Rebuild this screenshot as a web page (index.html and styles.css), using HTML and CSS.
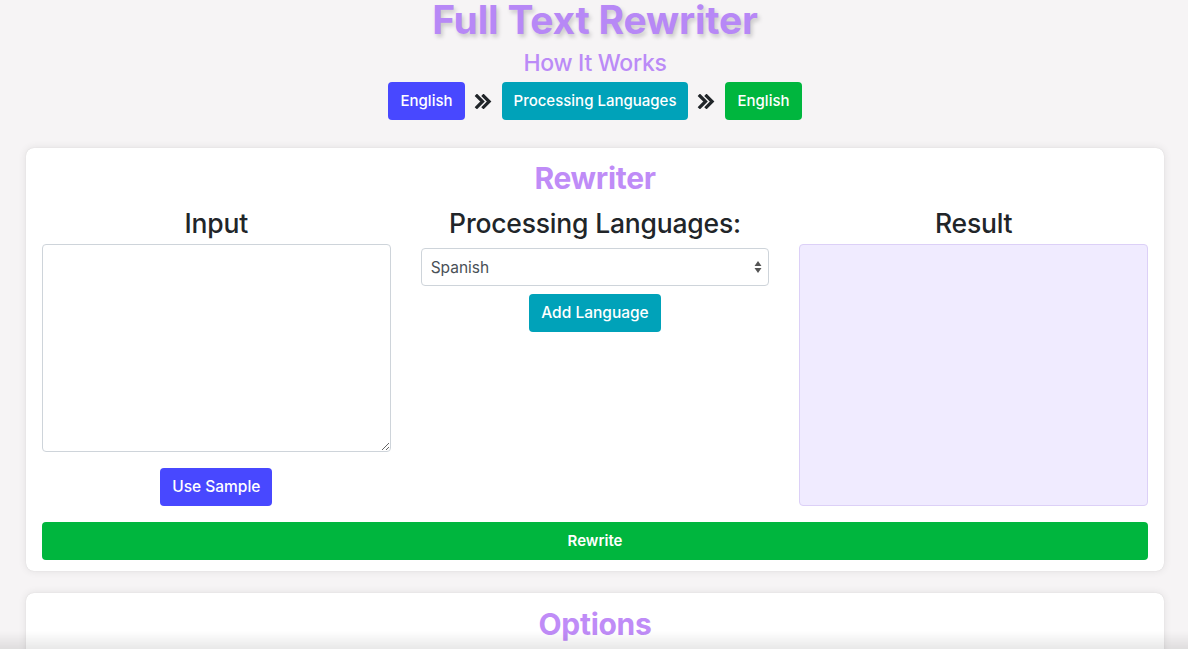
FILE: index.html
```html
<!DOCTYPE html>
<html>
<head>
<meta charset="utf-8">
<link rel="stylesheet" href="styles.css">
</head>
<body>
<header class="top">
  <h1 class="title">Full Text Rewriter</h1>
  <h2 class="subtitle">How It Works</h2>
  <div class="flow">
    <span class="btn btn-blue">English</span>
    <svg class="chev" viewBox="0 0 20 16" width="19" height="15"><path d="M3 2l6 6-6 6M10 2l6 6-6 6" fill="none" stroke="#212529" stroke-width="3.4" stroke-linecap="square" stroke-linejoin="miter"/></svg>
    <span class="btn btn-teal">Processing Languages</span>
    <svg class="chev" viewBox="0 0 20 16" width="19" height="15"><path d="M3 2l6 6-6 6M10 2l6 6-6 6" fill="none" stroke="#212529" stroke-width="3.4" stroke-linecap="square" stroke-linejoin="miter"/></svg>
    <span class="btn btn-green">English</span>
  </div>
</header>

<section class="card">
  <h2 class="card-title">Rewriter</h2>
  <div class="cols">
    <div class="col">
      <h3 class="col-title">Input</h3>
      <textarea class="input-box"></textarea>
      <button class="btn btn-blue btn-mid">Use Sample</button>
    </div>
    <div class="col">
      <h3 class="col-title">Processing Languages:</h3>
      <div class="select">
        <span>Spanish</span>
        <svg width="8" height="14" viewBox="0 0 8 14"><path d="M4 1L7.5 6H0.5Z M4 13L7.5 8H0.5Z" fill="#555"/></svg>
      </div>
      <button class="btn btn-teal btn-mid">Add Language</button>
    </div>
    <div class="col">
      <h3 class="col-title">Result</h3>
      <div class="result"></div>
    </div>
  </div>
  <button class="btn btn-green btn-full">Rewrite</button>
</section>

<section class="card card-options">
  <h2 class="card-title">Options</h2>
</section>

<div class="fade"></div>
</body>
</html>
```

FILE: styles.css
```css
* { box-sizing: border-box; }
html, body { margin: 0; padding: 0; }
body {
  background: #f6f4f5;
  font-family: Inter, "Noto Sans", sans-serif;
  color: #212529;
  padding: 0 24px 0 26px;
  overflow: hidden;
  height: 649px;
}
.top {
  display: flex;
  flex-direction: column;
  align-items: center;
}
.title {
  margin: 0;
  font-size: 39px;
  font-weight: 700;
  line-height: 40px;
  color: #b788f6;
  letter-spacing: -0.2px;
  text-shadow: 2px 3px 4px rgba(0,0,0,0.18);
}
.subtitle {
  margin: 10px 0 0;
  font-size: 23px;
  line-height: 26px;
  font-weight: 500;
  color: #bb8bf7;
  letter-spacing: -0.3px;
}
.flow {
  margin-top: 6px;
  display: flex;
  align-items: center;
  gap: 8px;
}
.flow .btn { font-size: 15px; }
.chev { display: block; margin: 0 1px; }
.btn {
  display: inline-block;
  border: none;
  border-radius: 4px;
  color: #fff;
  font-family: Inter, "Noto Sans", sans-serif;
  font-size: 15.5px;
  font-weight: 500;
  line-height: 38px;
  height: 38px;
  padding: 0 12px;
  white-space: nowrap;
}
.btn-blue { background: #4848ff; }
.btn-teal { background: #00a2b9; }
.btn-green { background: #00b63e; }

.card {
  background: #fff;
  border-radius: 8px;
  box-shadow: 0 0 8px rgba(0,0,0,0.09), 0 0 1px rgba(0,0,0,0.15);
  margin: 28px 0 0;
  padding: 10px 16px 11px;
  width: 1138px;
}
.card-title {
  margin: 0;
  text-align: center;
  font-size: 30px;
  line-height: 40px;
  font-weight: 700;
  color: #bf8cf7;
  letter-spacing: -0.3px;
}
.cols {
  display: grid;
  grid-template-columns: repeat(3, 1fr);
  column-gap: 30px;
  margin-top: 8px;
}
.col {
  display: flex;
  flex-direction: column;
  align-items: center;
}
.col-title {
  margin: 0;
  font-size: 26.5px;
  line-height: 34px;
  font-weight: 500;
  color: #212529;
  letter-spacing: -0.2px;
  height: 34px;
}
.input-box {
  display: block;
  width: 100%;
  height: 208px;
  border: 1px solid #ced4da;
  border-radius: 4px;
  margin: 4px 0 0;
  resize: vertical;
  background: #fff;
}
.btn-mid { margin-top: 16px; }
.select {
  margin-top: 8px;
  width: 100%;
  height: 38px;
  border: 1px solid #ced4da;
  border-radius: 4px;
  display: flex;
  align-items: center;
  justify-content: space-between;
  padding: 0 6px 0 9px;
  font-size: 15.5px;
  color: #495057;
}
.col .select + .btn-mid { margin-top: 8px; }
.result {
  margin-top: 4px;
  width: 100%;
  height: 262px;
  background: #f0ebff;
  border: 1px solid #dcd0f7;
  border-radius: 4px;
}
.btn-full {
  display: block;
  width: 100%;
  margin-top: 16px;
  font-size: 15px;
  font-weight: 600;
}
.card-options {
  margin-top: 22px;
  height: 120px;
  padding-top: 11px;
}
.fade {
  position: fixed;
  left: 0;
  right: 0;
  bottom: 0;
  height: 18px;
  background: linear-gradient(to bottom, rgba(0,0,0,0), rgba(0,0,0,0.09));
  pointer-events: none;
}
```
